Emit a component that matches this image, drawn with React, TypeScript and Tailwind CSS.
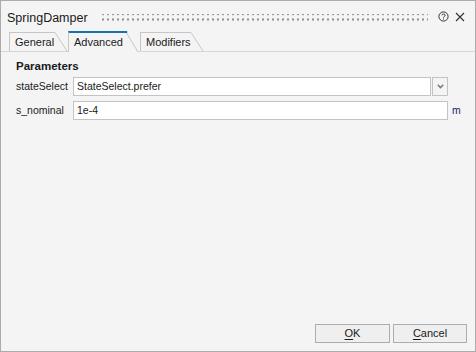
import React from "react";

const font = { fontFamily: '"Liberation Sans", Arial, sans-serif' };

function Tab({ label, width, active }: { label: string; width: number; active?: boolean }) {
  const h = active ? 21 : 19;
  return (
    <div className={`flex ${active ? "h-[21px] mb-[-1px] relative z-10" : "h-[19px]"}`}>
      <div
        className={`flex items-center pl-[5px] border-l border-[#c6c6c6] bg-[#f4f4f4] text-[11px] text-[#1a1a1a] whitespace-nowrap ${
          active ? "border-t-2 border-t-[#1473a8]" : "border-t"
        }`}
        style={{ width }}
      >
        <span className={active ? "mt-[-1px]" : ""}>{label}</span>
      </div>
      <svg width="12" height={h} className="block">
        <polygon points={`0,0 12,${h} 0,${h}`} fill="#f4f4f4" />
        <line x1="0" y1={active ? 1 : 0.5} x2="12" y2={h} stroke="#c6c6c6" strokeWidth="1" />
        {active && <line x1="0" y1="1" x2="1.2" y2="1" stroke="#1473a8" strokeWidth="2" />}
      </svg>
    </div>
  );
}

export default function App() {
  return (
    <div
      className="w-[476px] h-[352px] border border-[#acacac] bg-[#f4f4f4] flex flex-col text-[#1a1a1a]"
      style={font}
    >
      {/* Title bar */}
      <div className="h-[30px] flex items-center pl-[6px] pr-[10px] pt-[4px]">
        <span className="text-[12.5px] leading-none">SpringDamper</span>
        <svg className="ml-[14px] flex-1 h-[10px]" height="10">
          <defs>
            <pattern id="dots" width="5" height="5.5" patternUnits="userSpaceOnUse">
              <rect x="0" y="0" width="2" height="2" fill="#8c8c8c" />
            </pattern>
          </defs>
          <rect x="0" y="1" width="100%" height="8" fill="url(#dots)" />
        </svg>
        <svg width="11" height="11" viewBox="0 0 11 11" className="ml-[10px] mt-[-3px]">
          <circle cx="5.5" cy="5.5" r="4.6" fill="none" stroke="#333" strokeWidth="1" />
          <path d="M3.8 4.3 C3.8 2.6 7.2 2.6 7.2 4.3 C7.2 5.4 5.5 5.4 5.5 6.6" fill="none" stroke="#333" strokeWidth="1" />
          <rect x="5" y="7.5" width="1" height="1" fill="#333" />
        </svg>
        <svg width="10" height="10" viewBox="0 0 10 10" className="ml-[6px] mt-[-2px]">
          <path d="M1 1 L9 9 M9 1 L1 9" stroke="#333" strokeWidth="1.1" />
        </svg>
      </div>

      {/* Tab strip */}
      <div className="h-[21px] flex items-end pl-[8px] border-b border-[#d6d6d6]">
        <Tab label="General" width={46} />
        <div className="w-[1px]" />
        <Tab label="Advanced" width={58} active />
        <div className="w-[2px]" />
        <Tab label="Modifiers" width={51} />
      </div>

      {/* Content */}
      <div className="flex-1 flex flex-col pl-[15px] pt-[7px]">
        <div className="text-[11.5px] font-bold leading-[14px]">Parameters</div>
        <div className="grid grid-cols-[57px_1fr_27px] gap-y-[5px] mt-[4px] text-[10.5px] items-center">
          <div>stateSelect</div>
          <div className="flex h-[19px]">
            <div className="flex-1 border border-[#c3c3c3] bg-white flex items-center pl-[3px]">
              StateSelect.prefer
            </div>
            <div className="w-[16px] ml-[1px] border border-[#c3c3c3] bg-[#f4f4f4] flex items-center justify-center">
              <svg width="7" height="5" viewBox="0 0 7 5">
                <path d="M0.8 0.8 L3.5 3.6 L6.2 0.8" fill="none" stroke="#7a7a7a" strokeWidth="1.5" />
              </svg>
            </div>
          </div>
          <div />
          <div>s_nominal</div>
          <div className="h-[19px] border border-[#c3c3c3] bg-white flex items-center pl-[3px]">1e-4</div>
          <div className="pl-[4px] text-[#1a1a6e]">m</div>
        </div>
      </div>

      {/* Buttons */}
      <div className="flex justify-end gap-[3px] pr-[8px] pb-[8px]">
        <button className="w-[75px] h-[19px] border border-[#adadad] bg-[#efefef] text-[11px] leading-none">
          <span className="underline underline-offset-2">O</span>K
        </button>
        <button className="w-[74px] h-[19px] border border-[#adadad] bg-[#efefef] text-[11px] leading-none">
          <span className="underline underline-offset-2">C</span>ancel
        </button>
      </div>
    </div>
  );
}
